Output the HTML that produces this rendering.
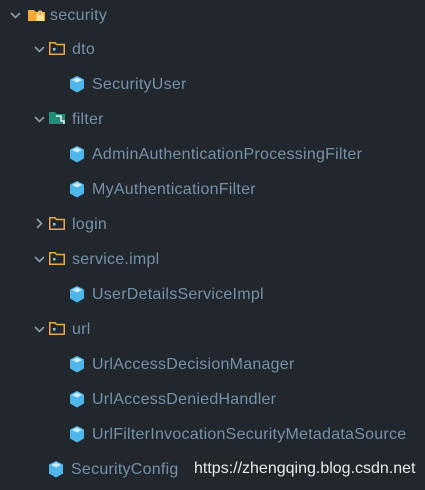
<!DOCTYPE html>
<html><head><meta charset="utf-8"><style>
html,body{margin:0;padding:0;}
body{width:425px;height:490px;background:#21272d;position:relative;overflow:hidden;font-family:"Liberation Sans","Noto Sans CJK SC",sans-serif;}
.t{position:absolute;font-size:16px;letter-spacing:0.25px;color:#7591a8;line-height:22px;white-space:nowrap;}
svg{position:absolute;}
.w{position:absolute;font-size:16px;color:#e8e8e8;line-height:20px;left:194px;top:459px;font-family:"Liberation Sans",sans-serif;}
</style></head><body>
<svg width="425" height="490">
<defs>
<g id="down"><path d="M0 0 L4.5 4.5 L9 0" fill="none" stroke="#8a9bab" stroke-width="1.6"/></g>
<g id="right"><path d="M0 0 L4.5 4.5 L0 9" fill="none" stroke="#8a9bab" stroke-width="1.6"/></g>
<g id="fold"><path d="M0.75 0.75 H6 L7.5 2.5 H15.25 V12.25 H0.75 Z" fill="none" stroke="#e8a94a" stroke-width="1.5"/><rect x="4" y="6" width="2.5" height="2.5" fill="#7dd3c0"/></g>
<g id="cube"><path d="M7 0 L14 3.5 V12.5 L7 16.5 L0 12.5 V3.5 Z" fill="#4fb6ea"/><path d="M7 1.5 L12 4 L7 6.5 L2 4 Z" fill="#c9ecfb"/></g>
</defs>
<use href="#down" x="11" y="13"/>
<path d="M28 10 H34 L36 12 H45 V21 H28 Z" fill="#f4a93a"/>
<rect x="36.5" y="15" width="7.5" height="6" fill="#f7e2a6"/><path d="M38 15 V13 A2 2 0 0 1 42 13 V15" fill="none" stroke="#f7e2a6" stroke-width="1.2"/>
<use href="#down" x="35" y="47"/><use href="#fold" x="49" y="42"/>
<use href="#cube" x="70" y="76"/>
<use href="#down" x="35" y="117"/>
<path d="M49 112 H55 L57 114 H65 V124 H49 Z" fill="#1f8f79"/>
<path d="M56 116 H61 V121 H64 V124" fill="none" stroke="#e6f4f0" stroke-width="1.5"/>
<use href="#cube" x="70" y="146"/>
<use href="#cube" x="70" y="181"/>
<use href="#right" x="37" y="219"/><use href="#fold" x="49" y="217"/>
<use href="#down" x="35" y="257"/><use href="#fold" x="49" y="252"/>
<use href="#cube" x="70" y="286"/>
<use href="#down" x="35" y="327"/><use href="#fold" x="49" y="322"/>
<use href="#cube" x="70" y="356"/>
<use href="#cube" x="70" y="391"/>
<use href="#cube" x="70" y="426"/>
<use href="#cube" x="49" y="461"/>
</svg>
<div class="t" style="left:50px;top:5px">security</div>
<div class="t" style="left:72px;top:39px">dto</div>
<div class="t" style="left:92px;top:74px">SecurityUser</div>
<div class="t" style="left:72px;top:109px">filter</div>
<div class="t" style="left:92px;top:144px">AdminAuthenticationProcessingFilter</div>
<div class="t" style="left:92px;top:179px">MyAuthenticationFilter</div>
<div class="t" style="left:72px;top:214px">login</div>
<div class="t" style="left:72px;top:249px">service.impl</div>
<div class="t" style="left:92px;top:284px">UserDetailsServiceImpl</div>
<div class="t" style="left:72px;top:319px">url</div>
<div class="t" style="left:92px;top:354px">UrlAccessDecisionManager</div>
<div class="t" style="left:92px;top:389px">UrlAccessDeniedHandler</div>
<div class="t" style="left:92px;top:424px">UrlFilterInvocationSecurityMetadataSource</div>
<div class="t" style="left:71px;top:459px">SecurityConfig</div>
<div class="w">https://zhengqing.blog.csdn.net</div>
</body></html>
